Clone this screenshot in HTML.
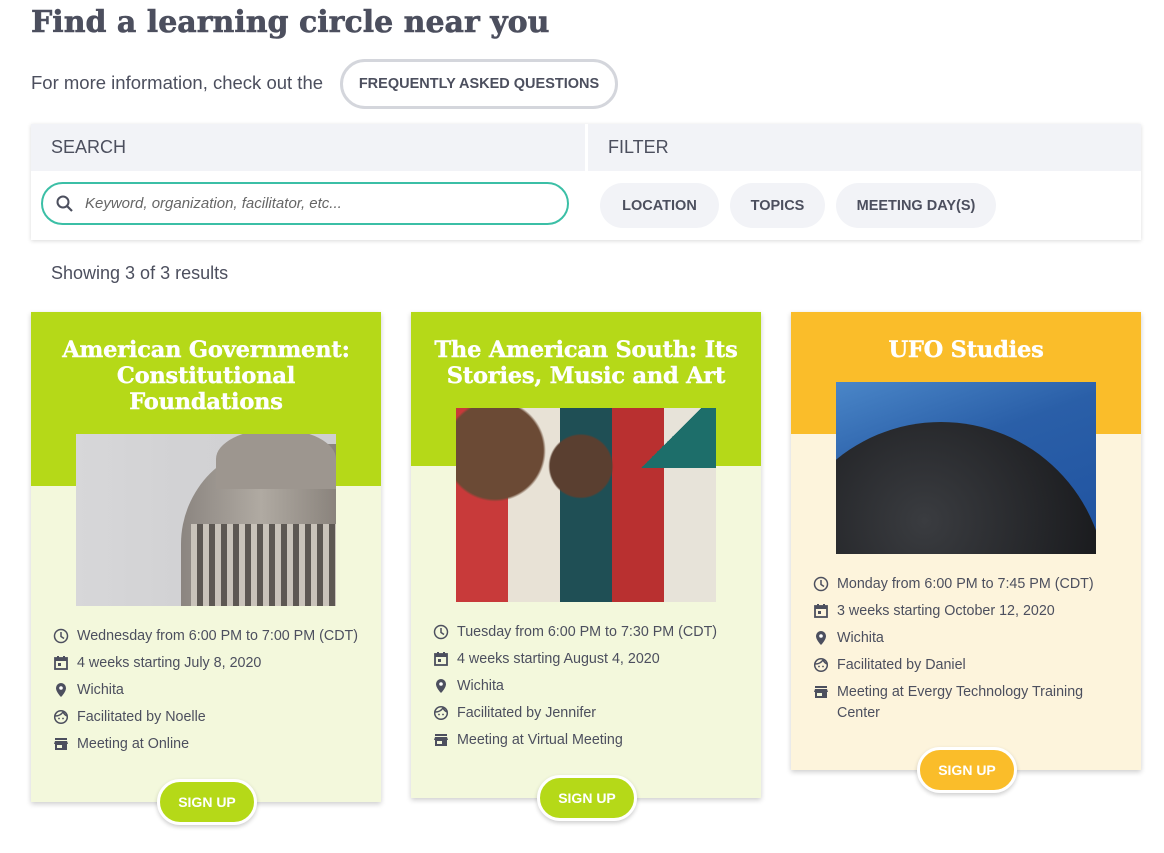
<!DOCTYPE html>
<html><head><meta charset="utf-8"><style>
*{box-sizing:border-box;margin:0;padding:0}
body{width:1164px;height:853px;background:#fff;font-family:"Liberation Sans",sans-serif;color:#4c4f5e;position:relative;overflow:hidden}
.a{position:absolute}
h1{position:absolute;left:31px;top:5px;font-family:"DejaVu Serif",serif;font-weight:900;font-size:30px;letter-spacing:0px;color:#4c4f5e;-webkit-text-stroke:0.6px #4c4f5e}
.btn{border-radius:30px;font-weight:bold;font-size:14px;display:flex;align-items:center;justify-content:center}
.card{position:absolute;width:350px;box-shadow:0 2px 5px rgba(0,0,0,.2)}
.hd{position:absolute;left:0;top:0;width:350px}
.tt{position:absolute;left:0;width:350px;text-align:center;color:#fff;font-family:"DejaVu Serif",serif;font-weight:bold;font-size:22.5px;line-height:26px;letter-spacing:-0.2px;-webkit-text-stroke:0.4px #fff}
.img{position:absolute;left:45px;width:260px}
.li{position:absolute;left:46px;font-size:14.3px;line-height:21px;width:290px}
.li svg{position:absolute;left:-24px;top:2px}
.su{position:absolute;width:100px;height:46px;border:3px solid #fff;color:#fff;box-shadow:0 2px 4px rgba(0,0,0,.2);border-radius:24px;font-weight:bold;font-size:14px;display:flex;align-items:center;justify-content:center}
</style></head><body>
<h1>Find a learning circle near you</h1>
<div class="a" style="left:31px;top:72px;font-size:18.5px">For more information, check out the</div>
<div class="a btn" style="left:340px;top:59px;width:278px;height:50px;border:3px solid #d4d6dc;font-size:14.5px">FREQUENTLY ASKED QUESTIONS</div>
<div class="a" style="left:31px;top:124px;width:1110px;height:116px;background:#fff;box-shadow:0 1px 4px rgba(0,0,0,.15)">
 <div class="a" style="left:0;top:0;width:554px;height:47px;background:#f2f3f7"></div>
 <div class="a" style="left:557px;top:0;width:553px;height:47px;background:#f2f3f7"></div>
 <div class="a" style="left:20px;top:13px;font-size:18px">SEARCH</div>
 <div class="a" style="left:577px;top:13px;font-size:18px">FILTER</div>
 <div class="a" style="left:10px;top:58px;width:528px;height:43px;border:2px solid #3bbfa6;border-radius:22px">
  <svg class="a" style="left:12px;top:10px" width="20" height="20" viewBox="0 0 20 20"><circle cx="8" cy="8" r="5.5" fill="none" stroke="#4c4f5e" stroke-width="2"/><path d="M12 12l5 5" stroke="#4c4f5e" stroke-width="2.2"/></svg>
  <div class="a" style="left:42px;top:11px;font-size:15px;font-style:italic;color:#666">Keyword, organization, facilitator, etc...</div>
 </div>
 <div class="a btn" style="left:569px;top:59px;width:119px;height:45px;background:#f2f3f7;font-size:14.5px">LOCATION</div>
 <div class="a btn" style="left:699px;top:59px;width:95px;height:45px;background:#f2f3f7;font-size:14.5px">TOPICS</div>
 <div class="a btn" style="left:805px;top:59px;width:160px;height:45px;background:#f2f3f7;font-size:14.5px">MEETING DAY(S)</div>
</div>
<div class="a" style="left:51px;top:263px;font-size:18px">Showing 3 of 3 results</div>

<svg width="0" height="0" style="position:absolute"><defs>
<symbol id="clk" viewBox="0 0 16 16"><circle cx="8" cy="8" r="6.5" fill="none" stroke="#4c4f5e" stroke-width="1.5"/><path d="M8 4v4.5l3 2" fill="none" stroke="#4c4f5e" stroke-width="1.5"/></symbol>
<symbol id="cal" viewBox="0 0 16 16"><rect x="2" y="3" width="12" height="11" fill="none" stroke="#4c4f5e" stroke-width="1.8"/><rect x="2" y="3" width="12" height="3" fill="#4c4f5e"/><rect x="4" y="1" width="2" height="3" fill="#4c4f5e"/><rect x="10" y="1" width="2" height="3" fill="#4c4f5e"/><rect x="5" y="8" width="3" height="3" fill="#4c4f5e"/></symbol>
<symbol id="pin" viewBox="0 0 16 16"><path d="M8 1a5 5 0 0 0-5 5c0 4 5 9 5 9s5-5 5-9a5 5 0 0 0-5-5z" fill="#4c4f5e"/><circle cx="8" cy="6" r="1.8" fill="#fff"/></symbol>
<symbol id="fac" viewBox="0 0 16 16"><circle cx="8" cy="8" r="6.3" fill="none" stroke="#4c4f5e" stroke-width="1.5"/><path d="M2 7c3 0 6-1 8-4 1 2 2 3 4 4" fill="none" stroke="#4c4f5e" stroke-width="1.5"/><circle cx="6" cy="9.5" r=".9" fill="#4c4f5e"/><circle cx="10" cy="9.5" r=".9" fill="#4c4f5e"/></symbol>
<symbol id="sto" viewBox="0 0 16 16"><rect x="2" y="2" width="12" height="2" fill="#4c4f5e"/><path d="M1 8l1-3h12l1 3z" fill="#4c4f5e"/><rect x="2" y="8" width="12" height="6" fill="#4c4f5e"/><rect x="4" y="9" width="5" height="3" fill="#f3f8dc"/></symbol>
</defs></svg>

<!-- Card 1 -->
<div class="card" style="left:31px;top:312px;height:490px;background:#f3f8dc">
 <div class="hd" style="height:174px;background:#b5d918"></div>
 <div class="tt" style="top:25px">American Government:<br>Constitutional<br>Foundations</div>
 <div class="img" style="top:122px;height:172px;background:linear-gradient(90deg,#d7d7d9 0%,#d2d2d4 40%,#cfcfd1 100%);overflow:hidden">
  <div class="a" style="left:105px;top:10px;width:200px;height:200px;border-radius:50% 0 0 0;background:linear-gradient(90deg,#8b8580,#b0aaa2 40%,#736c66)"></div>
  <div class="a" style="left:140px;top:-5px;width:120px;height:60px;border-radius:50% 50% 0 0;background:#9d968f"></div>
  <div class="a" style="left:115px;top:90px;width:150px;height:90px;background:repeating-linear-gradient(90deg,#c9c3ba 0 6px,#5d5853 6px 12px)"></div>
 </div>
 <div class="li" style="top:314px"><svg width="16" height="16"><use href="#clk"/></svg>Wednesday from 6:00 PM to 7:00 PM (CDT)</div>
 <div class="li" style="top:341px"><svg width="16" height="16"><use href="#cal"/></svg>4 weeks starting July 8, 2020</div>
 <div class="li" style="top:368px"><svg width="16" height="16"><use href="#pin"/></svg>Wichita</div>
 <div class="li" style="top:395px"><svg width="16" height="16"><use href="#fac"/></svg>Facilitated by Noelle</div>
 <div class="li" style="top:422px"><svg width="16" height="16"><use href="#sto"/></svg>Meeting at Online</div>
 <div class="su" style="left:126px;top:467px;background:#b5d918">SIGN UP</div>
</div>

<!-- Card 2 -->
<div class="card" style="left:411px;top:312px;height:486px;background:#f3f8dc">
 <div class="hd" style="height:154px;background:#b5d918"></div>
 <div class="tt" style="top:25px">The American South: Its<br>Stories, Music and Art</div>
 <div class="img" style="top:96px;height:194px;background:
  radial-gradient(circle at 15% 22%,#6b4a35 0 18%,transparent 19%),
  radial-gradient(circle at 48% 30%,#5a3f30 0 16%,transparent 17%),
  linear-gradient(135deg,transparent 50%,#1d6e6a 50%) 170px 0/90px 60px no-repeat,
  linear-gradient(90deg,#c83a3a 0 20%,#e8e2d6 20% 40%,#1f4f55 40% 60%,#b93030 60% 80%,#e7e3d9 80%) 0 0/100% 50%,
  linear-gradient(90deg,#e4ddcf 0 25%,#22403f 25% 50%,#e5dccb 50% 75%,#b83030 75%) 0 100%/100% 50% no-repeat,#ddd">
 </div>
 <div class="li" style="top:310px"><svg width="16" height="16"><use href="#clk"/></svg>Tuesday from 6:00 PM to 7:30 PM (CDT)</div>
 <div class="li" style="top:337px"><svg width="16" height="16"><use href="#cal"/></svg>4 weeks starting August 4, 2020</div>
 <div class="li" style="top:364px"><svg width="16" height="16"><use href="#pin"/></svg>Wichita</div>
 <div class="li" style="top:391px"><svg width="16" height="16"><use href="#fac"/></svg>Facilitated by Jennifer</div>
 <div class="li" style="top:418px"><svg width="16" height="16"><use href="#sto"/></svg>Meeting at Virtual Meeting</div>
 <div class="su" style="left:126px;top:463px;background:#b5d918">SIGN UP</div>
</div>

<!-- Card 3 -->
<div class="card" style="left:791px;top:312px;height:458px;background:#fdf4dc">
 <div class="hd" style="height:122px;background:#fabd2a"></div>
 <div class="tt" style="top:25px">UFO Studies</div>
 <div class="img" style="top:70px;height:172px;background:linear-gradient(160deg,#4a86c8,#2a5fa8 40%,#1f52a0);overflow:hidden">
  <div class="a" style="left:-60px;top:40px;width:330px;height:330px;border-radius:50%;background:radial-gradient(circle at 45% 30%,#3a3c40,#1a1b1e 60%)"></div>
 </div>
 <div class="li" style="top:262px"><svg width="16" height="16"><use href="#clk"/></svg>Monday from 6:00 PM to 7:45 PM (CDT)</div>
 <div class="li" style="top:289px"><svg width="16" height="16"><use href="#cal"/></svg>3 weeks starting October 12, 2020</div>
 <div class="li" style="top:316px"><svg width="16" height="16"><use href="#pin"/></svg>Wichita</div>
 <div class="li" style="top:343px"><svg width="16" height="16"><use href="#fac"/></svg>Facilitated by Daniel</div>
 <div class="li" style="top:370px;width:270px"><svg width="16" height="16"><use href="#sto"/></svg>Meeting at Evergy Technology Training Center</div>
 <div class="su" style="left:126px;top:435px;background:#fabd2a">SIGN UP</div>
</div>
</body></html>
